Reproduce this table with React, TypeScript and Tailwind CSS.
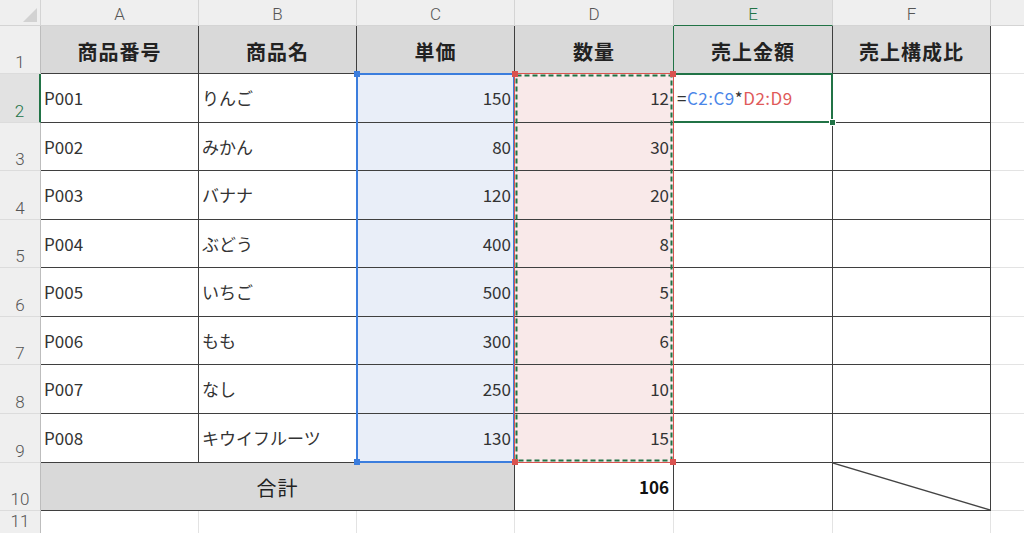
import clsx from "clsx";

const GRID =
  "grid grid-cols-[41px_158px_158px_158px_159px_159px_158px_1fr] grid-rows-[26px_48px_49px_48px_49px_48px_49px_48px_49px_49px_48px_1fr]";

const products = [
  { code: "P001", name: "りんご", price: 150, qty: 12 },
  { code: "P002", name: "みかん", price: 80, qty: 30 },
  { code: "P003", name: "バナナ", price: 120, qty: 20 },
  { code: "P004", name: "ぶどう", price: 400, qty: 8 },
  { code: "P005", name: "いちご", price: 500, qty: 5 },
  { code: "P006", name: "もも", price: 300, qty: 6 },
  { code: "P007", name: "なし", price: 250, qty: 10 },
  { code: "P008", name: "キウイフルーツ", price: 130, qty: 15 },
];

const headers = ["商品番号", "商品名", "単価", "数量", "売上金額", "売上構成比"];
const letters = ["A", "B", "C", "D", "E", "F"];

const cell = "border-r border-b border-r-[#3f3f3f] border-b-[#3f3f3f]";
const headFont = "font-['Roboto',sans-serif] text-[17px] font-light leading-none";

function RowHead({ n, active, top }: { n: number; active?: boolean; top?: boolean }) {
  return (
    <div
      className={clsx(
        "flex justify-center",
        headFont,
        top ? "items-start pt-[2px]" : "items-end border-b border-b-[#dcdcdc] pb-[2px]",
        active
          ? "border-r-2 border-r-[#217346] bg-[#e2e2e2] text-[#217346]"
          : "border-r border-r-[#bdbdbd] bg-[#efefef] text-[#555]"
      )}
    >
      {n}
    </div>
  );
}

function Gutter({ last }: { last?: boolean }) {
  return <div className={clsx(last ? "" : "border-b border-b-[#e3e3e3]")} />;
}

export default function App() {
  return (
    <div className="h-[533px] w-[1024px] overflow-hidden bg-white font-['Noto_Sans_CJK_JP','Noto_Sans',sans-serif] text-[#333]">
      <div className="relative h-full">
        <div className={clsx(GRID, "h-full")}>
          {/* column letters */}
          <div className="relative border-r border-b border-r-[#d4d4d4] border-b-[#d4d4d4] bg-[#efefef]">
            <div className="absolute right-[3px] bottom-[3px] h-0 w-0 border-b-[14px] border-l-[14px] border-b-[#d2d2d2] border-l-transparent" />
          </div>
          {letters.map((l) => (
            <div
              key={l}
              className={clsx(
                "flex items-center justify-center border-r border-b border-r-[#d4d4d4] pt-[3px]",
                headFont,
                l === "E"
                  ? "border-b-[#217346] bg-[#e2e2e2] text-[#217346]"
                  : "border-b-[#d4d4d4] bg-[#efefef] text-[#555]"
              )}
            >
              {l}
            </div>
          ))}
          <div className="border-b border-b-[#d4d4d4] bg-[#efefef]" />

          {/* row 1: table headers */}
          <RowHead n={1} />
          {headers.map((h, i) => (
            <div
              key={h}
              className={clsx(
                cell,
                "flex items-center justify-center bg-[#d9d9d9] pt-[4px] text-[20px] font-bold tracking-[1px] text-[#222]",
                i === 3 && "border-r-[#217346]"
              )}
            >
              {h}
            </div>
          ))}
          <Gutter />

          {/* rows 2-9 */}
          {products.map((p, i) => (
            <div key={p.code} className="contents">
              <RowHead n={i + 2} active={i === 0} />
              <div className={clsx(cell, "flex items-center px-[3px] text-[17px]")}>{p.code}</div>
              <div className={clsx(cell, "flex items-center px-[3px] text-[17px]")}>{p.name}</div>
              <div className={clsx(cell, "flex items-center justify-end bg-[#e9eef8] px-[3px] text-[17px]")}>
                {p.price}
              </div>
              <div className={clsx(cell, "flex items-center justify-end bg-[#f9e9e9] px-[4px] text-[17px]")}>
                {p.qty}
              </div>
              <div className={clsx(cell, "flex items-center px-[3px] text-[17px] tracking-[0.5px] whitespace-nowrap")}>
                {i === 0 && (
                  <>
                    <span>=</span>
                    <span className="text-[#4a86e8]">C2:C9</span>
                    <span>*</span>
                    <span className="text-[#e05a5a]">D2:D9</span>
                  </>
                )}
              </div>
              <div className={cell} />
              <Gutter />
            </div>
          ))}

          {/* row 10: total */}
          <RowHead n={10} />
          <div className={clsx(cell, "col-span-3 flex items-center justify-center bg-[#d9d9d9] pt-[2px] text-[20px] tracking-[1px] text-[#222]")}>
            合計
          </div>
          <div className={clsx(cell, "flex items-center justify-end px-[4px] text-[17px] font-bold text-[#111]")}>
            106
          </div>
          <div className={cell} />
          <div className={clsx(cell, "relative")}>
            <svg className="absolute inset-0 h-full w-full" preserveAspectRatio="none">
              <line x1="0" y1="0" x2="100%" y2="100%" stroke="#444" strokeWidth="1.3" />
            </svg>
          </div>
          <Gutter />

          {/* row 11 */}
          <RowHead n={11} top />
          {letters.map((l) => (
            <div key={l} className="border-r border-r-[#e3e3e3]" />
          ))}
          <Gutter last />
        </div>

        {/* selection overlays */}
        <div className={clsx(GRID, "pointer-events-none absolute inset-0")}>
          {/* active cell E2 */}
          <div className="relative col-start-6 row-start-3">
            <div className="absolute -top-px -left-px right-0 bottom-0 border-t-2 border-r-2 border-b-2 border-[#217346]">
              <div className="absolute -right-[5px] -bottom-[5px] h-[7px] w-[7px] border border-white bg-[#217346]" />
            </div>
          </div>
          {/* C2:C9 */}
          <div className="relative col-start-4 row-span-8 row-start-3">
            <div className="absolute -top-px -left-px right-0 bottom-0 border-2 border-[#3b7ddd]">
              <div className="absolute -top-[4px] -left-[4px] h-[6px] w-[6px] bg-[#3b7ddd]" />
              <div className="absolute -bottom-[4px] -left-[4px] h-[6px] w-[6px] bg-[#3b7ddd]" />
            </div>
          </div>
          {/* D2:D9 */}
          <div className="relative col-start-5 row-span-8 row-start-3">
            <div className="absolute -top-px -left-px right-0 bottom-0 border border-[#d9534f]">
              <svg className="absolute inset-0 h-full w-full">
                <rect
                  x="1.5"
                  y="1.5"
                  width="calc(100% - 3px)"
                  height="calc(100% - 3px)"
                  fill="none"
                  stroke="#217346"
                  strokeWidth="2"
                  strokeDasharray="5 3"
                />
              </svg>
              <div className="absolute -top-[3px] -left-[3px] h-[6px] w-[6px] bg-[#d9534f]" />
              <div className="absolute -top-[3px] -right-[3px] h-[6px] w-[6px] bg-[#d9534f]" />
              <div className="absolute -bottom-[3px] -left-[3px] h-[6px] w-[6px] bg-[#d9534f]" />
              <div className="absolute -right-[3px] -bottom-[3px] h-[6px] w-[6px] bg-[#d9534f]" />
            </div>
          </div>
        </div>
      </div>
    </div>
  );
}
